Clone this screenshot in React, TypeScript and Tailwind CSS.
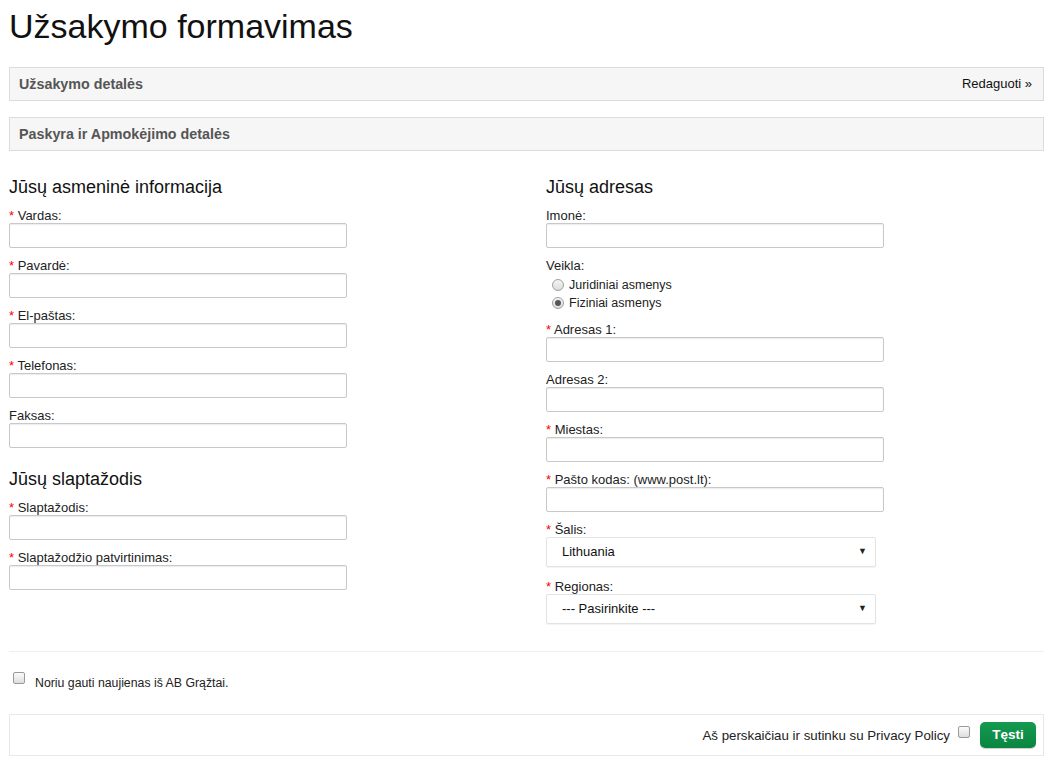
import React from "react";

function Req() {
  return <span className="text-[#ff0000]">* </span>;
}

function Field({ label, required }: { label: string; required?: boolean }) {
  return (
    <div className="mb-[10px]">
      <div className="text-[13px] leading-[15px] text-[#222]">
        {required && <Req />}
        {label}
      </div>
      <input
        type="text"
        className="block h-[25px] w-[338px] rounded-[2px] border border-[#c9c9c9] bg-white px-2 text-[13px] shadow-[inset_0_1px_1px_rgba(0,0,0,0.08)] outline-none"
      />
    </div>
  );
}

function SelectBox({ label, value, last }: { label: string; value: string; last?: boolean }) {
  return (
    <div className={last ? "" : "mb-[12px]"}>
      <div className="text-[13px] leading-[15px] text-[#222]">
        <Req />
        {label}
      </div>
      <div className="flex h-[30px] w-[330px] items-center justify-between rounded-[2px] border border-[#e3e3e3] bg-white pl-[15px] pr-[8px] text-[13px] text-[#111] shadow-[0_1px_1px_rgba(0,0,0,0.05)]">
        <span>{value}</span>
        <span className="text-[9px] text-[#222]">▼</span>
      </div>
    </div>
  );
}

function Radio({ label, checked }: { label: string; checked?: boolean }) {
  return (
    <div className="flex h-[18px] items-center pl-[6px]">
      <span className="flex h-[12px] w-[12px] items-center justify-center rounded-full border border-[#a0a0a0] bg-[linear-gradient(#f4f4f4,#dcdcdc)]">
        {checked && <span className="h-[6px] w-[6px] rounded-full bg-[#555]" />}
      </span>
      <span className="ml-[5px] text-[12.5px] leading-[18px] text-[#222]">{label}</span>
    </div>
  );
}

function Checkbox({ className = "" }: { className?: string }) {
  return (
    <span
      className={
        "block h-[12px] w-[12px] shrink-0 rounded-[2px] border border-[#9a9a9a] bg-[linear-gradient(#fbfbfb,#dedede)] " +
        className
      }
    />
  );
}

function Panel({ title, action }: { title: string; action?: string }) {
  return (
    <div className="flex items-center justify-between border border-[#dcdcdc] bg-[#f6f6f6] py-[6px] pl-[9px] pr-[11px]">
      <span className="text-[14.3px] font-bold leading-[20px] text-[#555]">{title}</span>
      {action && <span className="text-[13px] leading-[20px] text-[#111]">{action}</span>}
    </div>
  );
}

export default function App() {
  return (
    <div className="min-h-screen bg-white pl-[9px] pr-[12px] pt-[6px] font-['Liberation_Sans',Arial,sans-serif] text-[#222]">
      <h1 className="text-[34px] leading-[40px] text-[#111]">Užsakymo formavimas</h1>

      <div className="mt-[21px]">
        <Panel title="Užsakymo detalės" action="Redaguoti »" />
      </div>
      <div className="mt-[16px]">
        <Panel title="Paskyra ir Apmokėjimo detalės" />
      </div>

      <div className="mt-[26px] grid grid-cols-[497px_1fr] gap-x-[40px]">
        <div>
          <h2 className="mb-[11px] text-[18px] leading-[20px] text-[#111]">Jūsų asmeninė informacija</h2>
          <Field label="Vardas:" required />
          <Field label="Pavardė:" required />
          <Field label="El-paštas:" required />
          <Field label="Telefonas:" required />
          <Field label="Faksas:" />
          <h2 className="mb-[11px] mt-[21px] text-[18px] leading-[20px] text-[#111]">Jūsų slaptažodis</h2>
          <Field label="Slaptažodis:" required />
          <Field label="Slaptažodžio patvirtinimas:" required />
        </div>

        <div>
          <h2 className="mb-[11px] text-[18px] leading-[20px] text-[#111]">Jūsų adresas</h2>
          <Field label="Imonė:" />
          <div className="mb-[10px]">
            <div className="text-[13px] leading-[15px] text-[#222]">Veikla:</div>
            <div className="mt-[3px]">
              <Radio label="Juridiniai asmenys" />
              <Radio label="Fiziniai asmenys" checked />
            </div>
          </div>
          <Field label="Adresas 1:" required />
          <Field label="Adresas 2:" />
          <Field label="Miestas:" required />
          <Field label="Pašto kodas: (www.post.lt):" required />
          <SelectBox label="Šalis:" value="Lithuania" />
          <SelectBox label="Regionas:" value="--- Pasirinkite ---" last />
        </div>
      </div>

      <div className="mt-[27px] border-t border-[#eeeeee]" />

      <div className="mt-[20px] flex items-start">
        <Checkbox className="ml-[4px]" />
        <span className="ml-[10px] mt-[3px] text-[12.3px] leading-[16px] text-[#222]">
          Noriu gauti naujienas iš AB Grąžtai.
        </span>
      </div>

      <div className="mt-[23px] flex h-[42px] items-center justify-end border border-[#e8e8e8] pr-[7px]">
        <span className="text-[13.3px] leading-[15px] text-[#222]">Aš perskaičiau ir sutinku su Privacy Policy</span>
        <Checkbox className="mb-[6px] ml-[8px]" />
        <button className="ml-[10px] flex h-[26px] w-[56px] items-center justify-center rounded-[5px] bg-[linear-gradient(#14994f,#0b8540)] text-[13.5px] font-bold text-white shadow-[0_1px_1px_rgba(0,0,0,0.2)]">
          Tęsti
        </button>
      </div>
    </div>
  );
}
